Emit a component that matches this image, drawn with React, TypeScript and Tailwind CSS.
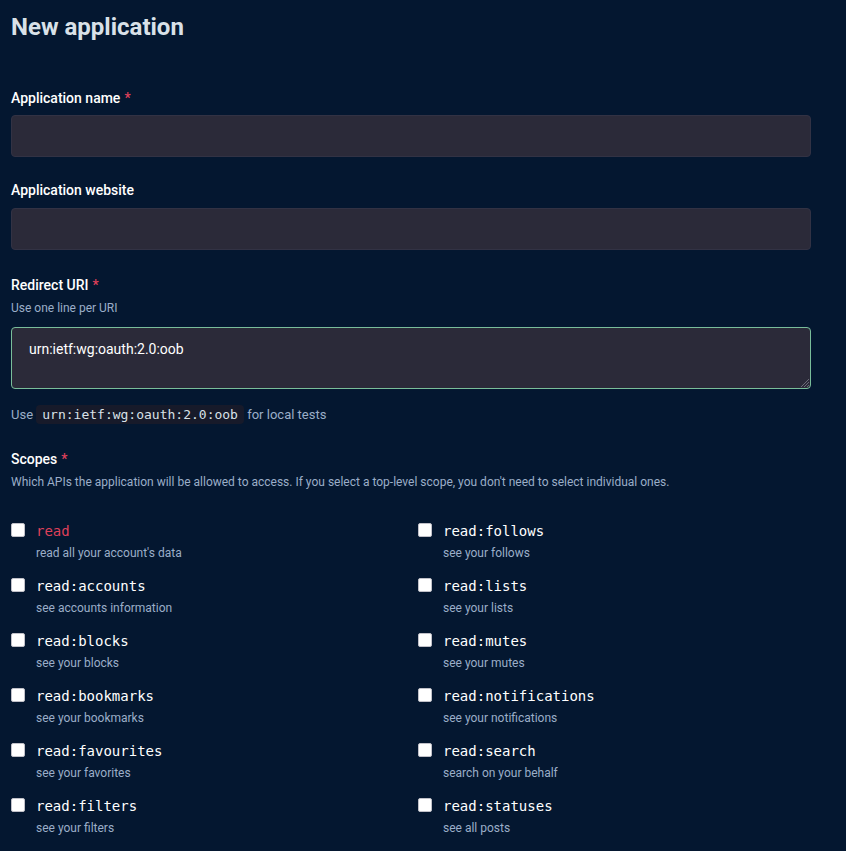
const SCOPES: [string, string][] = [
  ["read", "read all your account's data"],
  ["read:follows", "see your follows"],
  ["read:accounts", "see accounts information"],
  ["read:lists", "see your lists"],
  ["read:blocks", "see your blocks"],
  ["read:mutes", "see your mutes"],
  ["read:bookmarks", "see your bookmarks"],
  ["read:notifications", "see your notifications"],
  ["read:favourites", "see your favorites"],
  ["read:search", "search on your behalf"],
  ["read:filters", "see your filters"],
  ["read:statuses", "see all posts"],
];

const mono = "font-['DejaVu_Sans_Mono','Liberation_Mono',monospace]";

function Label({ text, required }: { text: string; required?: boolean }) {
  return (
    <p className="text-[14px] font-medium leading-5 text-white">
      {text}
      {required && <span className="ml-1 text-[#df405a]">*</span>}
    </p>
  );
}

export default function App() {
  return (
    <div className="min-h-[851px] bg-[#041730] px-[11px] font-['Roboto','Liberation_Sans',sans-serif]">
      <h1 className="pt-[12px] text-[24px] font-bold leading-[30px] text-[#d9e1e8]">New application</h1>

      <div className="mt-[46px] w-[800px]">
        <Label text="Application name" required />
        <div className="mt-[7px] h-[42px] rounded bg-[#2b2a39] border border-[#323244]" />

        <div className="mt-[23px]">
          <Label text="Application website" />
        </div>
        <div className="mt-[8px] h-[42px] rounded bg-[#2b2a39] border border-[#323244]" />

        <div className="mt-[25px]">
          <Label text="Redirect URI" required />
        </div>
        <p className="mt-[5px] text-[12px] leading-4 text-[#9baec8]">Use one line per URI</p>
        <div className="relative mt-[11px] h-[62px] rounded border border-[#79bd9a] bg-[#2b2a39] px-[17px] pt-[11px] text-[14px] text-white">
          urn:ietf:wg:oauth:2.0:oob
          <svg className="absolute bottom-[1px] right-[1px]" width="9" height="9" viewBox="0 0 9 9">
            <path d="M9 1L1 9M9 4L4 9M9 7L7 9" stroke="#6b6b78" strokeWidth="1" />
          </svg>
        </div>

        <p className="mt-[16px] text-[13px] leading-5 text-[#9baec8]">
          Use{" "}
          <code className={`${mono} rounded bg-[#171a2a] px-[6px] py-[2px] text-[13px] text-[#d9e1e8]`}>
            urn:ietf:wg:oauth:2.0:oob
          </code>{" "}
          for local tests
        </p>

        <div className="mt-[24px]">
          <Label text="Scopes" required />
        </div>
        <p className="mt-[5px] text-[12px] leading-4 text-[#9baec8]">
          Which APIs the application will be allowed to access. If you select a top-level scope, you don't need to
          select individual ones.
        </p>

        <div className="mt-[30px] grid grid-cols-[407px_1fr] gap-y-[14px]">
          {SCOPES.map(([name, desc]) => (
            <div key={name} className="flex gap-[11px]">
              <div className="mt-[3px] h-[14px] w-[14px] shrink-0 rounded-[2px] bg-white border border-[#c0c0c8]" />
              <div>
                <p className={`${mono} text-[14px] leading-[22px] ${name === "read" ? "text-[#df405a]" : "text-white"}`}>
                  {name}
                </p>
                <p className="mt-[3px] text-[12px] leading-4 text-[#9baec8]">{desc}</p>
              </div>
            </div>
          ))}
        </div>
      </div>
    </div>
  );
}
